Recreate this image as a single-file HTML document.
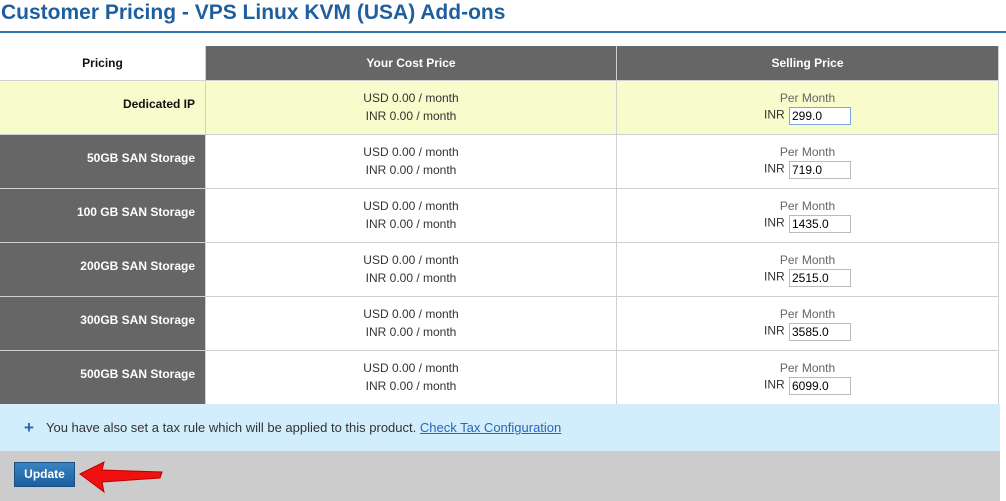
<!DOCTYPE html><html><head><style>
body{margin:0;width:1006px;height:501px;background:#fff;font-family:"Liberation Sans",Arial,sans-serif;position:relative;overflow:hidden;font-size:12px}
h1{position:absolute;left:1px;top:1px;margin:0;font-size:21px;color:#1f5f9e;font-weight:bold}
.line{position:absolute;left:0;top:31px;width:1006px;height:2px;background:#2a75b3}
.c0,.c1,.c2{position:absolute;box-sizing:border-box;border-bottom:1px solid #d0d0d0}
.c0{left:0;width:206px;background:#666;color:#fff;font-weight:bold;text-align:right;padding-right:10px;border-right:1px solid #d0d0d0}
.c1{left:206px;width:411px;text-align:center;color:#333;border-right:1px solid #d0d0d0}
.c2{left:617px;width:382px;text-align:center;color:#333;border-right:1px solid #d0d0d0}
.h{top:46px;height:35px;line-height:34px;background:#666;color:#fff;font-weight:bold;text-align:center;padding:0}
.h.c0{background:#fff;color:#111;border-right:1px solid #d0d0d0}
.l{position:absolute;right:10px;top:16px;line-height:14px}
.m{padding-top:8px;line-height:18px}
.pm{color:#666;line-height:16px;padding-top:9px}
input{width:56px;height:16px;border:1px solid #bbb;font:12px "Liberation Sans",Arial,sans-serif;padding:0 2px;vertical-align:middle;margin:1px 0 0 1px}
.y{background:#f8fbcb!important}
.tax{position:absolute;left:0;top:404px;width:1000px;height:47px;background:#d2edfb;font-size:13px;color:#333;line-height:47px}
.tax b{color:#2a66b8;font-size:17px;position:absolute;left:24px;font-weight:900}
.tax span{position:absolute;left:46px}
.tax a{color:#2a66b8;text-decoration:underline}
.foot{position:absolute;left:0;top:451px;width:1000px;height:50px;background:#cbcccb}
.btn{position:absolute;left:14px;top:462px;width:59px;height:23px;background:linear-gradient(#3a83c4,#1c5f9e);border:1px solid #194e82;color:#fff;font-weight:bold;font-size:12px;text-align:center;line-height:23px}
</style></head><body>
<h1>Customer Pricing - VPS Linux KVM (USA) Add-ons</h1>
<div class="line"></div>
<div class="c0 h">Pricing</div><div class="c1 h">Your Cost Price</div><div class="c2 h">Selling Price</div>

<div class="c0 y" style="top:81px;height:54px;color:#111"><span class="l">Dedicated IP</span></div>
<div class="c1 m y" style="top:81px;height:54px">USD 0.00 / month<br>INR 0.00 / month</div>
<div class="c2 y" style="top:81px;height:54px"><div class="pm">Per Month</div>INR <input value="299.0" style="border-color:#7aa7e0"></div>

<div class="c0" style="top:135px;height:54px"><span class="l">50GB SAN Storage</span></div>
<div class="c1 m" style="top:135px;height:54px">USD 0.00 / month<br>INR 0.00 / month</div>
<div class="c2" style="top:135px;height:54px"><div class="pm">Per Month</div>INR <input value="719.0"></div>

<div class="c0" style="top:189px;height:54px"><span class="l">100 GB SAN Storage</span></div>
<div class="c1 m" style="top:189px;height:54px">USD 0.00 / month<br>INR 0.00 / month</div>
<div class="c2" style="top:189px;height:54px"><div class="pm">Per Month</div>INR <input value="1435.0"></div>

<div class="c0" style="top:243px;height:54px"><span class="l">200GB SAN Storage</span></div>
<div class="c1 m" style="top:243px;height:54px">USD 0.00 / month<br>INR 0.00 / month</div>
<div class="c2" style="top:243px;height:54px"><div class="pm">Per Month</div>INR <input value="2515.0"></div>

<div class="c0" style="top:297px;height:54px"><span class="l">300GB SAN Storage</span></div>
<div class="c1 m" style="top:297px;height:54px">USD 0.00 / month<br>INR 0.00 / month</div>
<div class="c2" style="top:297px;height:54px"><div class="pm">Per Month</div>INR <input value="3585.0"></div>

<div class="c0" style="top:351px;height:53px;border-bottom:none"><span class="l">500GB SAN Storage</span></div>
<div class="c1 m" style="top:351px;height:53px;border-bottom:none">USD 0.00 / month<br>INR 0.00 / month</div>
<div class="c2" style="top:351px;height:53px;border-bottom:none"><div class="pm">Per Month</div>INR <input value="6099.0"></div>

<div class="tax"><b>+</b><span>You have also set a tax rule which will be applied to this product. <a>Check Tax Configuration</a></span></div>
<div class="foot"></div>
<div class="btn">Update</div>
<svg style="position:absolute;left:68px;top:460px" width="100" height="36"><path d="M12 14 L36 2 L34 10 L94 12 L92 18 L34 22 L36 32 Z" fill="#f01010" stroke="#b00" stroke-width="1"/></svg>
</body></html>
